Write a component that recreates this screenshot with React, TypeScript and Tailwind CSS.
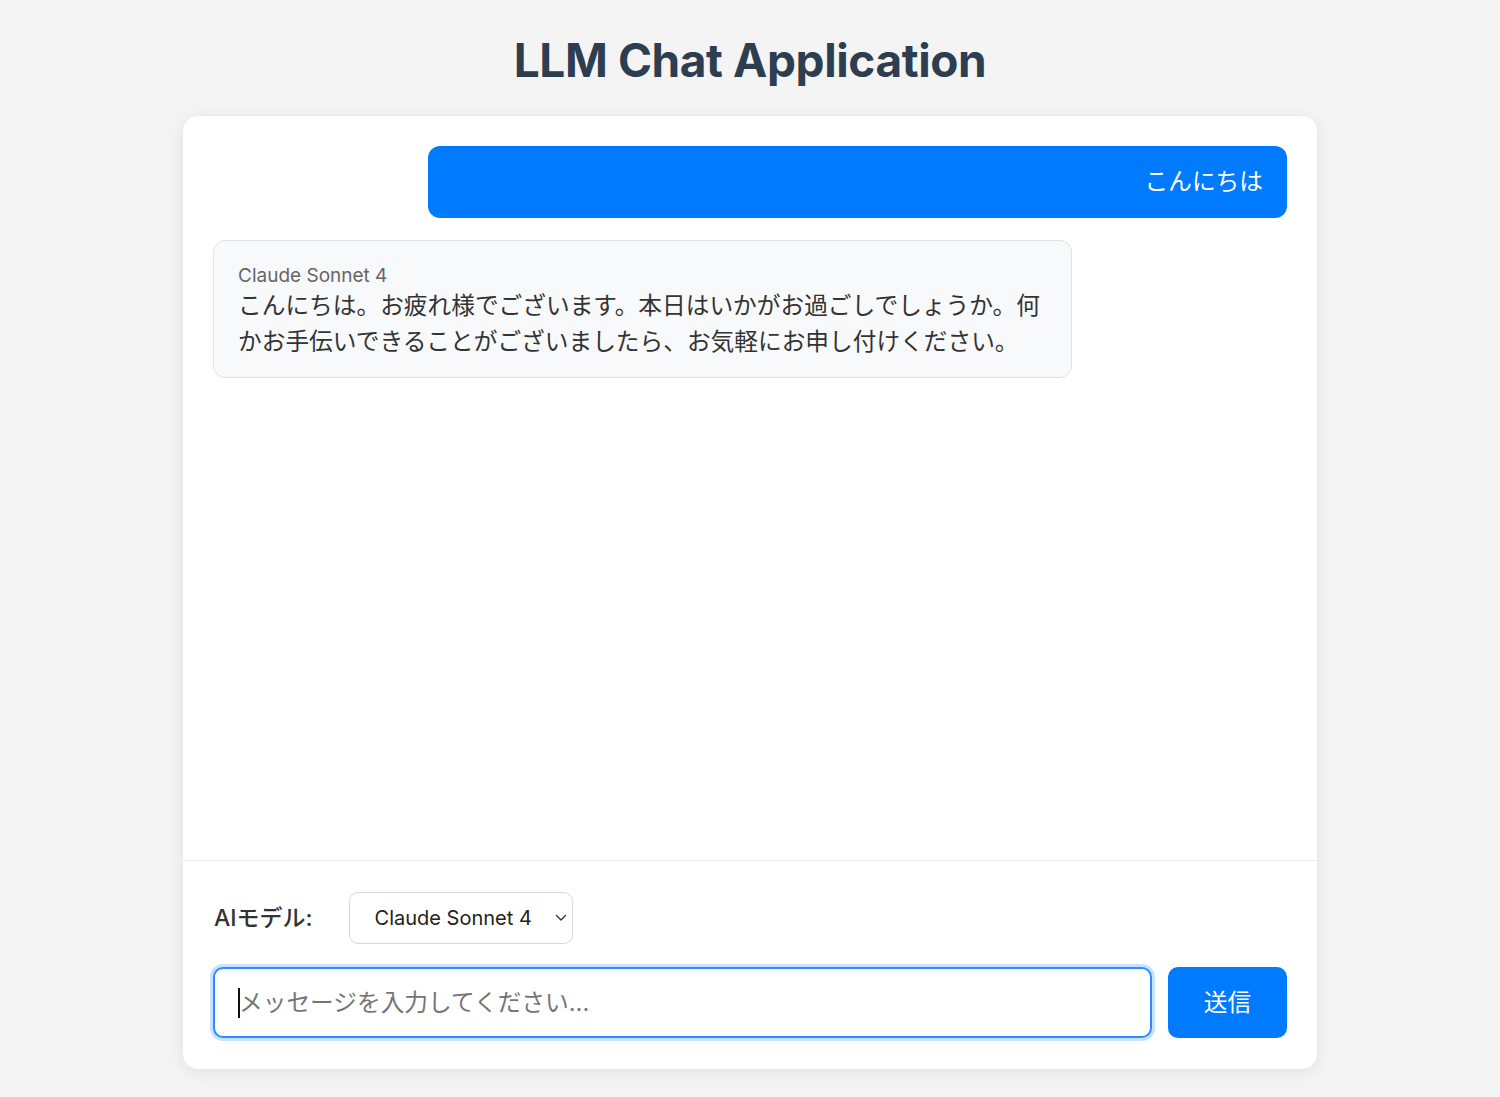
import { useState } from 'react';

const FONT = "font-['Inter','Noto_Sans_CJK_JP',sans-serif]";

interface Message {
  role: 'user' | 'assistant';
  model?: string;
  text: string;
}

const MESSAGES: Message[] = [
  { role: 'user', text: 'こんにちは' },
  {
    role: 'assistant',
    model: 'Claude Sonnet 4',
    text: 'こんにちは。お疲れ様でございます。本日はいかがお過ごしでしょうか。何かお手伝いできることがございましたら、お気軽にお申し付けください。',
  },
];

export default function App() {
  const [model, setModel] = useState('claude-sonnet-4');
  const [input, setInput] = useState('');

  return (
    <div className={`min-h-[1097px] bg-[#f4f4f4] pt-[31px] ${FONT}`}>
      <h1 className="mb-[27px] text-center text-[46px] font-bold leading-[58px] tracking-[-0.4px] text-[#2c3e50]">
        LLM Chat Application
      </h1>

      <div className="mx-auto w-[1134px] rounded-[15px] bg-white shadow-[0_3px_16px_rgba(0,0,0,0.08)]">
        {/* messages */}
        <div className="flex h-[744px] flex-col gap-[22px] px-[30px] pt-[30px]">
          {MESSAGES.map((m, i) =>
            m.role === 'user' ? (
              <div
                key={i}
                className="self-end w-[859px] rounded-[12px] bg-[#007bff] px-[24px] py-[18px] text-right text-[23.7px] leading-[36px] text-white"
              >
                {m.text}
              </div>
            ) : (
              <div
                key={i}
                className="self-start w-[859px] rounded-[12px] border border-[#dfe3e8] bg-[#f8f9fa] px-[24px] pt-[19px] pb-[17px] text-[#333]"
              >
                <div className="pt-[4px] text-[19px] leading-[24px] text-[#666]">{m.model}</div>
                <div className="text-[23.7px] leading-[36px]">{m.text}</div>
              </div>
            )
          )}
        </div>

        {/* controls */}
        <div className="border-t border-[#e9ecef] px-[30px] pt-[31px] pb-[31px]">
          <div className="flex items-center gap-[36px]">
            <label className="pl-[1px] text-[23px] font-medium text-[#333]">AIモデル:</label>
            <div className="relative">
              <select
                value={model}
                onChange={(e) => setModel(e.target.value)}
                className={`h-[52px] w-[224px] appearance-none rounded-[9px] border border-[#d5d8dc] bg-white pl-[25px] pr-[36px] text-[20px] text-[#222] outline-none ${FONT}`}
              >
                <option value="claude-sonnet-4">Claude Sonnet 4</option>
                <option value="gpt-4o">GPT-4o</option>
              </select>
              <svg
                className="pointer-events-none absolute right-[6px] top-[22px]"
                width="12"
                height="8"
                viewBox="0 0 12 8"
                fill="none"
              >
                <path d="M1.5 1.5 6 6l4.5-4.5" stroke="#333" strokeWidth="1.4" strokeLinecap="round" strokeLinejoin="round" />
              </svg>
            </div>
          </div>

          <div className="mt-[23px] flex gap-[16px]">
            <div className="relative flex-1">
              <input
                value={input}
                onChange={(e) => setInput(e.target.value)}
                placeholder="メッセージを入力してください..."
                className={`h-[71px] w-full rounded-[10px] border-2 border-[#2b8cff] bg-white px-[24px] text-[23.7px] text-[#222] caret-transparent shadow-[0_0_0_3px_rgba(0,123,255,0.22)] outline-none placeholder:text-[#757575] ${FONT}`}
              />
              {input === '' && (
                <span className="pointer-events-none absolute left-[25px] top-[21px] h-[30px] w-[2px] bg-[#111]" />
              )}
            </div>
            <button className="h-[71px] w-[119px] rounded-[10px] bg-[#007bff] text-[23.7px] text-white">
              送信
            </button>
          </div>
        </div>
      </div>
    </div>
  );
}
